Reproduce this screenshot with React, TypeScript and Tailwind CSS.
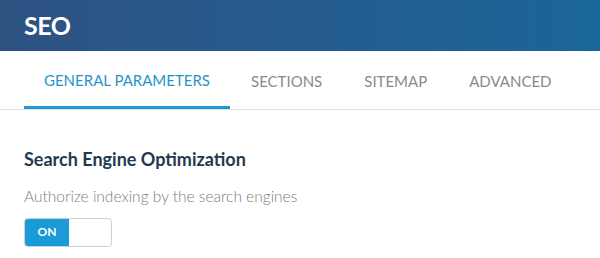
const tabs = ["GENERAL PARAMETERS", "SECTIONS", "SITEMAP", "ADVANCED"];

export default function App() {
  return (
    <div className="w-[600px] h-[258px] bg-white font-['Lato',sans-serif] overflow-hidden">
      {/* Header */}
      <div className="h-[51px] bg-gradient-to-r from-[#2d5282] to-[#19669a] flex items-center px-6">
        <h1 className="text-white font-bold text-[25px] leading-none tracking-[-0.5px]">SEO</h1>
      </div>

      {/* Tabs */}
      <div className="border-b border-[#e0e0e0] px-6 flex">
        {tabs.map((t, i) => (
          <div
            key={t}
            className={
              i === 0
                ? "h-[58px] px-5 flex items-center text-[15px] text-[#2a93c6] border-b-[3px] border-[#1b9ad6] pt-[3px] -mb-px"
                : "h-[58px] px-[21px] flex items-center text-[15px] text-[#8a8a8a] pt-[3px]"
            }
          >
            {t}
          </div>
        ))}
      </div>

      {/* Content */}
      <div className="px-6 pt-[40px]">
        <h2 className="text-[18px] font-bold text-[#1f3a50] leading-none">Search Engine Optimization</h2>
        <p className="mt-[21px] text-[15.5px] text-[#7c7c7c] font-light leading-none">
          Authorize indexing by the search engines
        </p>
        <div className="mt-[13px] w-[88px] h-[29px] rounded-[4px] border border-[#cfcfcf] flex overflow-hidden">
          <div className="w-[44px] bg-[#1a9ad6] flex items-center justify-center text-white text-[12px] font-bold">
            ON
          </div>
        </div>
      </div>
    </div>
  );
}
